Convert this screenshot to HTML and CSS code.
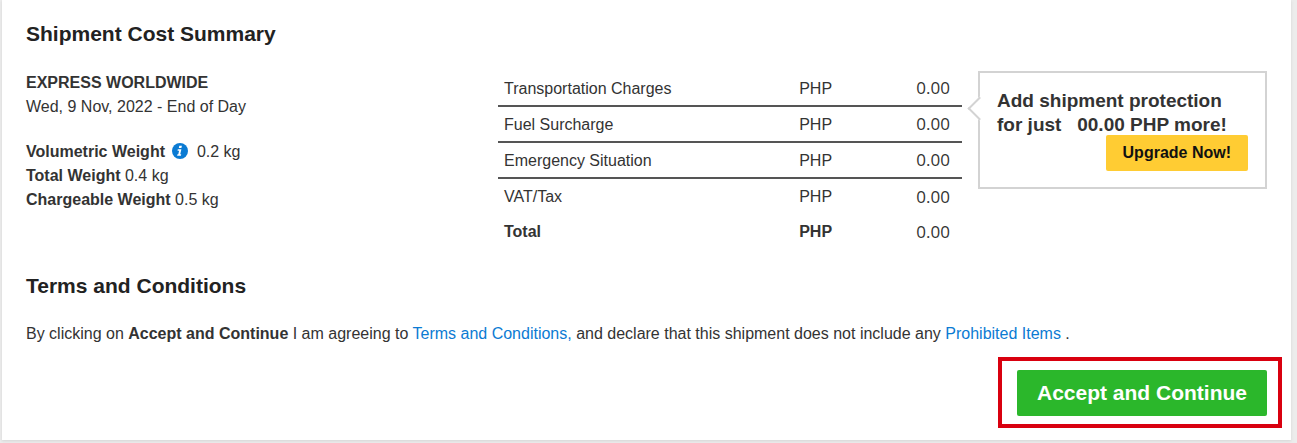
FILE: index.html
```html
<!DOCTYPE html>
<html lang="en">
<head>
	<meta charset="utf-8">
	<title>Shipment Cost Summary</title>
	<link rel="stylesheet" href="styles.css">
</head>

<body>
	<main class="card">
		<section>
			<h2>Shipment Cost Summary</h2>
			<div class="summary">
				<div class="details">
					<p><strong>EXPRESS WORLDWIDE</strong><br />
					Wed, 9 Nov, 2022 - End of Day</p>
					<p><strong>Volumetric Weight</strong>
					<svg class="info" viewBox="0 0 16 16" role="img" aria-label="Info">
						<circle cx="8" cy="8" r="8" fill="#0b7bd3"/>
						<path d="M7.3 2.7h2.6l-.5 2.3H6.8zM5.8 6.2h3.6l-1.2 5h1l-.3 1.6H5.1l.4-1.6h.8l.8-3.4H5.5z" fill="#fff"/>
					</svg>
					0.2 kg<br />
					<strong>Total Weight</strong> 0.4 kg<br />
					<strong>Chargeable Weight</strong> 0.5 kg</p>
				</div>

				<table class="charges">
					<tbody>
						<tr><th scope="row">Transportation Charges</th><td class="currency">PHP</td><td class="amount">0.00</td></tr>
						<tr><th scope="row">Fuel Surcharge</th><td class="currency">PHP</td><td class="amount">0.00</td></tr>
						<tr><th scope="row">Emergency Situation</th><td class="currency">PHP</td><td class="amount">0.00</td></tr>
						<tr class="plain"><th scope="row">VAT/Tax</th><td class="currency">PHP</td><td class="amount">0.00</td></tr>
						<tr class="plain total"><th scope="row">Total</th><td class="currency">PHP</td><td class="amount">0.00</td></tr>
					</tbody>
				</table>

				<aside class="protection">
					<p>Add shipment protection<br />
					for just &nbsp; 00.00 PHP more!</p>
					<button type="button" class="upgrade">Upgrade Now!</button>
				</aside>
			</div>
		</section>

		<section class="terms">
			<h2>Terms and Conditions</h2>
			<p>By clicking on <strong>Accept and Continue</strong> I am agreeing to <a href="#terms">Terms and Conditions,</a> and declare that this shipment does not include any <a href="#prohibited">Prohibited Items</a> .</p>
		</section>

		<div class="highlight">
			<button type="button" class="accept">Accept and Continue</button>
		</div>
	</main>
</body>
</html>
```
FILE: styles.css
```css
*{
	box-sizing: border-box;
	margin: 0;
	padding: 0;
}
body{
	background-color: #ececec;
	color: #333;
	font-family: "Liberation Sans", Arial, sans-serif;
	font-size: 16px;
	line-height: 24px;
}
.card{
	display: flex;
	flex-direction: column;
	margin: 0 6px 3px 2px;
	padding: 20px 24px 12px;
	background-color: #fff;
	box-shadow: 0 1px 3px #d4d4d4;
}
h2{
	color: #222;
	font-size: 21px;
	line-height: 28px;
}
button{
	border: 0;
	border-radius: 2px;
	font-family: inherit;
	font-weight: bold;
	cursor: pointer;
}
a{
	color: #0b7bd3;
	text-decoration: none;
}
.summary{
	display: grid;
	grid-template-columns: 456fr 464fr 289fr;
	column-gap: 16px;
	align-items: start;
	margin-top: 23px;
}
.details p{
	margin-bottom: 21px;
}
.info{
	width: 16px;
	height: 16px;
	margin: 0 4px 0 3px;
	vertical-align: -2px;
}
.charges{
	width: 100%;
	border-spacing: 0;
}
.charges th,
.charges td{
	height: 36px;
	padding-top: 2px;
	border-bottom: 2px solid #555;
	font-weight: normal;
	line-height: 20px;
	text-align: right;
}
.charges th{
	padding-left: 6px;
	text-align: left;
}
.charges .currency{
	width: 20%;
}
.charges .amount{
	width: 28%;
	padding-top: 0;
	padding-right: 12px;
	font-family: "Open Sans", "Noto Sans", sans-serif;
	font-size: 17px;
}
.charges .plain th,
.charges .plain td{
	height: 35px;
	padding-top: 0;
	border-bottom: 0;
}
.charges .total th,
.charges .total .currency{
	font-weight: bold;
}
.protection{
	position: relative;
	padding: 16px 17px;
	border: 2px solid #d3d3d3;
}
/* arrow pointing at the charges */
.protection::before{
	content: "";
	position: absolute;
	top: 27px;
	left: -9px;
	width: 15px;
	height: 15px;
	border-bottom: 2px solid #d3d3d3;
	border-left: 2px solid #d3d3d3;
	background-color: #fff;
	transform: rotate(45deg);
}
.protection p{
	font-size: 19px;
	font-weight: bold;
	white-space: nowrap;
}
.upgrade{
	display: block;
	height: 36px;
	margin-top: -2px;
	margin-left: auto;
	padding: 0 17px;
	background-color: #fc3;
	color: #111;
	font-size: 16px;
}
.terms{
	margin-top: 23px;
}
.terms p{
	margin-top: 22px;
}
.highlight{
	align-self: flex-end;
	margin: 11px -15px 0 0;
	padding: 9px 11px 8px 15px;
	border: 4px solid #d9000f;
}
.accept{
	height: 46px;
	padding: 0 20px;
	background-color: #2bb72b;
	color: #fff;
	font-size: 21px;
}
```
